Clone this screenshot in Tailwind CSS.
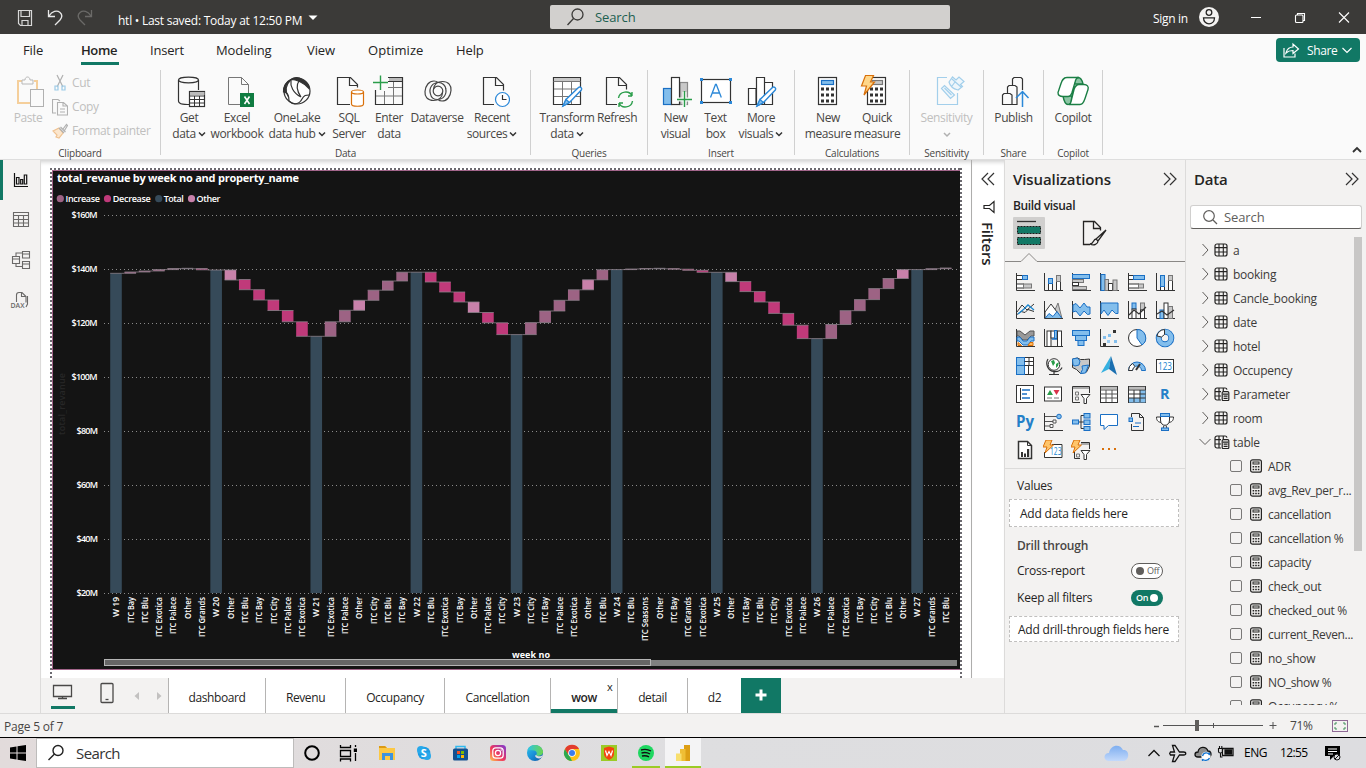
<!DOCTYPE html>
<html lang="en">
<head>
<meta charset="utf-8">
<title>htl - Power BI Desktop</title>
<script src="https://cdn.jsdelivr.net/npm/@tailwindcss/browser@4"></script>
</head>
<body class="w-[1366px] h-[768px] overflow-hidden flex flex-col font-['Open_Sans','Noto_Sans',sans-serif] text-[12px] text-[#252423] bg-[#f3f2f1] whitespace-nowrap">

<!-- shared symbols -->
<svg width="0" height="0" class="absolute">
  <defs>
    <symbol id="tbl" viewBox="0 0 14 14"><rect x="1" y="1" width="12" height="12" rx="2" fill="none" stroke="#252423" stroke-width="1.2"/><path d="M5 1v12M9.3 1v12M1 4.6h12M1 9h12" fill="none" stroke="#252423" stroke-width="1.1"/></symbol>
    <symbol id="tblcalc" viewBox="0 0 16 14"><path d="M7 13H3a2 2 0 0 1-2-2V3a2 2 0 0 1 2-2h8a2 2 0 0 1 2 1.6M5 1v12M9.3 1v3M1 4.6h6M1 9h6" fill="none" stroke="#252423" stroke-width="1.2"/><rect x="8.2" y="4.6" width="6.6" height="9" rx="1.2" fill="#f3f2f1" stroke="#252423" stroke-width="1.2"/><path d="M9 7.2h5M9.6 9.2h4M9.6 11.3h4" stroke="#252423" stroke-width="1.2"/></symbol>
    <symbol id="calc" viewBox="0 0 14 14"><rect x="1.6" y=".8" width="10.8" height="12.4" rx="2" fill="none" stroke="#252423" stroke-width="1.2"/><rect x="4" y="3" width="6" height="2" fill="none" stroke="#252423"/><path d="M3.6 7.7h1.6M6.2 7.7h1.6M8.8 7.7h1.6M3.6 10.4h1.6M6.2 10.4h1.6M8.8 10.4h1.6" stroke="#252423" stroke-width="1.5"/></symbol>
    <symbol id="pen" viewBox="0 0 22 22"><path d="M17.500 2c1.500-1.500 4 .5 2.800 2.500L8.500 17l-6.500 3.500L5 14z" fill="#fff" stroke="#2b88d8" stroke-width="1.4"/><path d="M5 14l3.500 3-6.500 3.500z" fill="#83beec" stroke="#2b88d8"/></symbol>
  </defs>
</svg>

<!-- title bar -->
<header class="h-[34px] shrink-0 bg-[#3b3a38] text-white flex items-center relative">
  <svg class="w-[110px] h-[34px]" viewBox="0 0 110 34" fill="none">
    <path d="M18.500 10.500h13v15h-11l-2-2zM21 10.500v6h8.500v-6M22 25.500v-5h6v5" stroke="#d8d8d8" stroke-width="1.200"/>
    <path d="M48.500 10v6.500h6.500M49 16c3-5 8-6 11-3.500s2 5 0 7.500l-5 5" stroke="#e8e8e8" stroke-width="1.300"/>
    <path d="M91.500 10v6.500H85M91 16c-3-5-8-6-11-3.500s-2 5 0 7.500l5 5" stroke="#6b6a68" stroke-width="1.300"/>
  </svg>
  <div class="w-[184px] ml-2 mt-[8px] tracking-[-0.25px]">htl • Last saved: Today at 12:50 PM</div>
  <svg class="w-3 h-3 ml-[5px]" viewBox="0 0 12 12"><path d="M1.500 4.500h9L6 9z" fill="#fff"/></svg>
  <div class="ml-[231px] w-[400px] h-6 bg-[#d2d0ce] rounded-[2px] flex items-center text-[#1c5f50] text-[13px]">
    <svg class="w-5 h-5 ml-4" viewBox="0 0 20 20" fill="none" stroke="#3b3a38" stroke-width="1.300"><circle cx="11.500" cy="7.500" r="5.500"/><path d="M7.500 11.500L1.500 18"/></svg>
    <span class="ml-[9px] mt-[2px] tracking-[-0.1px]">Search</span>
  </div>
  <div class="ml-[203px] w-[38px] tracking-[-0.3px] pt-[3px]">Sign in</div>
  <svg class="w-[20px] h-[20px] ml-[8px]" viewBox="0 0 20 20"><circle cx="10" cy="10" r="10" fill="#f3f2f1"/><g fill="none" stroke="#252423" stroke-width="1.300"><circle cx="10" cy="5.500" r="2.800"/><path d="M4.500 10.800h11c0 8-11 8-11 0z"/></g></svg>
  <svg class="absolute left-[1240px] top-0 w-[126px] h-[34px]" viewBox="1240 0 126 34" fill="none" stroke="#fff" stroke-width="1.100"><path d="M1251 17.500h10M1339 12.500l10 10M1349 12.500l-10 10"/><rect x="1295.500" y="15" width="7.500" height="7.500" rx="1"/><path d="M1297.500 15v-1.500h7V20.500h-1.500"/></svg>
</header>

<!-- ribbon tabs -->
<nav class="h-8 shrink-0 bg-[#fafafa] flex items-start text-[13px] pl-[23px] relative pt-[7px]">
  <span class="w-[58px] tracking-[-0.1px]">File</span>
  <span class="w-[38px] mr-[31px] font-semibold h-[24px] border-b-[3px] border-[#117865] tracking-[-0.4px]">Home</span>
  <span class="w-[66px] tracking-[-0.2px]">Insert</span>
  <span class="w-[91px] tracking-[-0.1px]">Modeling</span>
  <span class="w-[61px] tracking-[-0.1px]">View</span>
  <span class="w-[88px] tracking-[0.1px]">Optimize</span>
  <span class="tracking-[-0.1px]">Help</span>
  <div class="ml-auto mr-[6px] -mt-[3px] w-[84px] h-6 rounded bg-[#117865] text-white text-[12px] flex items-center">
    <svg class="w-5 h-5 ml-[5px]" viewBox="0 0 20 20" fill="none" stroke="#fff" stroke-width="1.200"><path d="M3 8v9h11v-3.500M5 13c1-4 3-6 7-6V4l5.500 5L12 13.500V10.500c-3 0-5 .5-7 2.500z"/></svg>
    <span class="ml-[6px] mt-[2px] tracking-[-0.4px]">Share</span>
    <svg class="w-3 h-3 ml-[4px]" viewBox="0 0 12 12" fill="none" stroke="#fff" stroke-width="1.200"><path d="M1.500 4L6 8.500 10.500 4"/></svg>
  </div>
</nav>

<!-- ribbon -->
<section class="h-[94px] shrink-0 bg-[#fafafa] flex text-[12px] leading-4 text-[#484644] tracking-[-0.38px] border-b border-[#dedede] relative">
  <div class="w-[161px] border-r border-[#d0d0d0] mb-1 mt-1 flex flex-col">
    <div class="flex h-[76px] shrink-0 text-[#c0bfbe]">
      <div class="w-[56px] flex flex-col items-center pt-[6px]">
        <svg class="w-[32px] h-8 ml-1" viewBox="14 76 32 32" fill="none"><path d="M22 81h-4v22h12M34 81h3v8" stroke="#f5cf9b" stroke-width="2"/><path d="M22 84v-4h3c0-4 5-4 5 0h3v4z" stroke="#b8b8b8"/><rect x="30.500" y="89.500" width="13" height="17" stroke="#b0b0b0" fill="#fafafa"/></svg>
        <span class="mt-[2px]">Paste</span>
      </div>
      <div class="flex flex-col pt-[1px]">
        <div class="h-6 flex items-center"><svg class="w-4 h-[18px] mr-[1px] -ml-[4px]" viewBox="0 0 16 18" fill="none" stroke="#b0b0b0" stroke-width="1.200"><path d="M5 1l6 12M11 1L5 13"/><path d="M3 12h3v4H3zM10 12h3v4h-3z" stroke="#9ccbe8"/></svg><span class="ml-[3px]">Cut</span></div>
        <div class="h-6 flex items-center"><svg class="w-4 h-[18px] mr-[1px] -ml-[4px]" viewBox="0 0 16 18" fill="none" stroke="#b0b0b0" stroke-width="1.100"><path d="M4 15H.5V1.500H6l2 1.500M5.500 4.500h6L15.500 8v9h-10zM11 4.500V8h4M8 11h5M8 14h5"/></svg><span class="ml-[3px]">Copy</span></div>
        <div class="h-6 flex items-center"><svg class="w-4 h-[18px] mr-[1px] -ml-[4px]" viewBox="0 0 16 18" fill="none" stroke="#b0b0b0" stroke-width="1.200"><path d="M1 9l6-3 4 5-4 5-3-1 1-2z" stroke="#efc18f" fill="#fbe6cd"/><path d="M7 6l5 5M8.500 5l5 5M11 7l3.500-4.500 1 1L12.500 8.500"/></svg><span class="ml-[3px]">Format painter</span></div>
      </div>
    </div>
    <div class="text-[10px] tracking-[-0.2px] text-center leading-[14px]">Clipboard</div>
  </div>

  <div class="w-[370px] border-r border-[#d0d0d0] mb-1 mt-1 flex flex-col">
    <div class="flex h-[76px] shrink-0 pl-1">
      <div class="w-12 flex flex-col items-center pt-[4px]"><svg class="w-9 h-9" viewBox="171 74 36 36" fill="none" stroke="#333" stroke-width="1.200"><path d="M178.500 80v21c0 4 9 3.500 10.500 3.500M198.500 80v10"/><ellipse cx="188.500" cy="80" rx="10" ry="2.800"/><rect x="189.500" y="91.500" width="15" height="15" fill="#fff"/><path d="M190 93.500h14.500" stroke="#bbb" stroke-width="3"/><path d="M189.500 96h15M189.500 99.500h15M189.500 103h15M194.500 96v10M199.500 96v10" stroke-width="1"/></svg><span>Get</span><span class="flex items-center">data<svg class="w-2 h-2 ml-[2px]" viewBox="0 0 8 8" fill="none" stroke="#333" stroke-width="1.500"><path d="M1 2.500l3 3 3-3"/></svg></span></div>
      <div class="w-12 flex flex-col items-center pt-[4px]"><svg class="w-9 h-9" viewBox="219 74 36 36" fill="none" stroke="#777"><path d="M240 104.500H228.500V77.500h13l7 7V93M241.500 77.500v7h7"/><rect x="240" y="93" width="14" height="14" fill="#107c41" stroke="none"/><path d="M244.500 96.500l5 7.500M249.500 96.500l-5 7.500" stroke="#fff" stroke-width="1.600"/></svg><span>Excel</span><span>workbook</span></div>
      <div class="w-[72px] flex flex-col items-center pt-[4px]"><svg class="w-9 h-9" viewBox="280 74 36 36" fill="none" stroke="#333" stroke-width="1.200"><circle cx="298" cy="91" r="13" fill="#fff"/><path d="M292 79.500c-5 2-8 7-7.500 12.500 2 0 4 2 5 5-4-6-3-12 2.500-17.500zM292 79.500c3-2.500 8-2.500 11 0 4 2 7 5 7 9-5-6-13-9-18-9z" fill="#333"/><path d="M285 92c3 0 5 3 5 9 4 4 10 4 13-2 2-4 4-4 7-4M292 80c-1 6 2 13 10 17M300 81c-3 4-2 10 2 16"/></svg><span>OneLake</span><span class="flex items-center">data hub<svg class="w-2 h-2 ml-[2px]" viewBox="0 0 8 8" fill="none" stroke="#333" stroke-width="1.500"><path d="M1 2.500l3 3 3-3"/></svg></span></div>
      <div class="w-8 flex flex-col items-center pt-[4px]"><svg class="w-9 h-9 shrink-0" viewBox="332 74 36 36" fill="none" stroke="#333" stroke-width="1.200"><path d="M351 104.500H338.500V77.500h13l7 7v3M350.500 77.500v8h8"/><path d="M352.500 92v12c0 3 12 3 12 0V92" stroke="#d9700a" fill="#fff"/><ellipse cx="358.500" cy="92" rx="6" ry="2" stroke="#d9700a" fill="#fff"/></svg><span>SQL</span><span>Server</span></div>
      <div class="w-12 flex flex-col items-center pt-[4px]"><svg class="w-9 h-9" viewBox="371 74 36 36" fill="none" stroke="#333" stroke-width="1.200"><path d="M389 79.500h13" stroke="#bbb" stroke-width="3"/><path d="M388 77.500h14.500v27h-27V90M388 81.500h14.500"/><path d="M384.500 91v13M393.500 82v22M388 87.500h14M376 96h26" stroke="#777" stroke-width="1"/><path d="M380.500 75.500v14.500M373 82.500h15" stroke="#2a9d4a" stroke-width="1.400"/></svg><span>Enter</span><span>data</span></div>
      <div class="w-12 flex flex-col items-center pt-[4px]"><svg class="w-9 h-9" viewBox="419 74 36 36" fill="none" stroke="#444" stroke-width="1.200"><circle cx="438" cy="91" r="4.800"/><path d="M442.500 92.500c0 5-4 8-9 8-6 0-9-4-8.500-9 .5-6 4-10.500 9-10.500 2 0 3 .5 4 1.500M433.500 89.500c0-5 4-8 9-8 6 0 9 4 8.500 9-.5 6-4 10.500-9 10.500-2 0-3-.5-4-1.500M430.500 94c-2-6 2-11.500 8-11.500 4 0 7 3 7.500 6.500M445.500 88c2 6-2 11.500-8 11.500-4 0-6.500-2.500-7-5.500"/></svg><span>Dataverse</span></div>
      <div class="w-[62px] flex flex-col items-center pt-[4px]"><svg class="w-9 h-9" viewBox="474 74 36 36" fill="none" stroke="#333" stroke-width="1.200"><path d="M494 104.500H483.500V77.500h13l7 7v6M495.500 77.500v8h8"/><circle cx="502.500" cy="99.500" r="7" stroke="#2b88d8" fill="#fff"/><path d="M502.500 95v4.500h4"/></svg><span>Recent</span><span class="flex items-center">sources<svg class="w-2 h-2 ml-[2px]" viewBox="0 0 8 8" fill="none" stroke="#333" stroke-width="1.500"><path d="M1 2.500l3 3 3-3"/></svg></span></div>
    </div>
    <div class="text-[10px] tracking-[-0.2px] text-center leading-[14px]">Data</div>
  </div>

  <div class="w-[117px] border-r border-[#d0d0d0] mb-1 mt-1 flex flex-col">
    <div class="flex h-[76px] shrink-0">
      <div class="w-[72px] flex flex-col items-center pt-[4px]"><svg class="w-9 h-9" viewBox="549 74 36 36" fill="none" stroke="#333" stroke-width="1.200"><path d="M553.500 77.500h27v27h-27z" fill="#fff"/><path d="M554 79.500h26" stroke="#c8c8c8" stroke-width="3"/><path d="M553.500 81.500h27M562.500 82v22M571.500 82v22M554 89h26M554 96.500h26" stroke="#777" stroke-width="1"/><use href="#pen" x="561" y="85.500" width="22" height="22"/></svg><span>Transform</span><span class="flex items-center">data<svg class="w-2 h-2 ml-[2px]" viewBox="0 0 8 8" fill="none" stroke="#333" stroke-width="1.500"><path d="M1 2.500l3 3 3-3"/></svg></span></div>
      <div class="w-7 flex flex-col items-center pt-[4px]"><svg class="w-9 h-9 shrink-0" viewBox="599 74 36 36" fill="none" stroke="#333" stroke-width="1.200"><path d="M617 104.500H606.500V77.500h13l7 7v5M618.500 77.500v8h8"/><path d="M618.500 98c1-7 11-8 13.500-2v-4M632 96h-4M632.500 101c-1 7-11 8-13.500 2v4M619 103h4" stroke="#2a9d4a" stroke-width="1.400"/></svg><span>Refresh</span></div>
    </div>
    <div class="text-[10px] tracking-[-0.2px] text-center leading-[14px]">Queries</div>
  </div>

  <div class="w-[147px] border-r border-[#d0d0d0] mb-1 mt-1 flex flex-col">
    <div class="flex h-[76px] shrink-0 pl-1">
      <div class="w-[47px] flex flex-col items-center pt-[4px]"><svg class="w-9 h-9" viewBox="658 74 36 36" fill="none" stroke="#333" stroke-width="1.200"><rect x="680" y="82.500" width="7.500" height="22" fill="#c8c8c8" stroke="#888"/><rect x="663.500" y="88.500" width="8" height="16" fill="#83beec" stroke="#1a6fc4"/><rect x="671.500" y="77.500" width="8" height="27" fill="#fff"/><path d="M684.500 92v15M677 99.500h15" stroke="#fafafa" stroke-width="4"/><path d="M684.500 91v16M677 99.500h15" stroke="#2a9d4a" stroke-width="1.400"/></svg><span>New</span><span>visual</span></div>
      <div class="w-[33px] flex flex-col items-center pt-[4px]"><svg class="w-9 h-9 shrink-0" viewBox="698 74 36 36" fill="none" stroke="#333" stroke-width="1.200"><rect x="701.500" y="79.500" width="29" height="23" fill="#fff"/><path d="M700 78h3v3h-3zM729 78h3v3h-3zM700 101h3v3h-3zM729 101h3v3h-3z" fill="#2b88d8" stroke="none"/><path d="M710.500 97.500l5-13h.8l5 13M712.500 93h7" stroke="#2b88d8" stroke-width="1.300"/></svg><span>Text</span><span>box</span></div>
      <div class="w-[58px] flex flex-col items-center pt-[4px]"><svg class="w-9 h-9" viewBox="743 74 36 36" fill="none" stroke="#333" stroke-width="1.200"><path d="M748.500 88.500h7.500v16h-7.500zM756.500 77.500h8v27h-8zM764.500 82.500h8v22h-8z" fill="#fff"/><use href="#pen" x="755" y="85.500" width="22" height="22"/></svg><span>More</span><span class="flex items-center">visuals<svg class="w-2 h-2 ml-[2px]" viewBox="0 0 8 8" fill="none" stroke="#333" stroke-width="1.500"><path d="M1 2.500l3 3 3-3"/></svg></span></div>
    </div>
    <div class="text-[10px] tracking-[-0.2px] text-center leading-[14px]">Insert</div>
  </div>

  <div class="w-[115px] border-r border-[#d0d0d0] mb-1 mt-1 flex flex-col">
    <div class="flex h-[76px] shrink-0">
      <div class="w-[66px] flex flex-col items-center pt-[4px]"><svg class="w-9 h-9" viewBox="810 74 36 36" fill="none" stroke="#333" stroke-width="1.200"><rect x="818.500" y="77.500" width="18" height="27" fill="#fff"/><rect x="821.500" y="80.500" width="12" height="4" fill="#83beec" stroke="#1a6fc4"/><path d="M821 89h13M821 95h13M821 101h13" stroke-width="3" stroke-dasharray="3 2"/></svg><span>New</span><span>measure</span></div>
      <div class="w-8 flex flex-col items-center pt-[4px]"><svg class="w-9 h-9 shrink-0" viewBox="859 74 36 36" fill="none" stroke="#333" stroke-width="1.200"><rect x="867.500" y="77.500" width="18" height="27" fill="#fff"/><rect x="872" y="80.500" width="10.500" height="4" fill="#c8c8c8" stroke="#777"/><path d="M870 89h13M870 95h13M870 101h13" stroke-width="3" stroke-dasharray="3 2"/><path d="M865.500 75.500h8l-3 6.500h4l-10.500 13 2.500-9h-5z" fill="#ffd78a" stroke="#d9700a"/></svg><span>Quick</span><span>measure</span></div>
    </div>
    <div class="text-[10px] tracking-[-0.2px] text-center leading-[14px]">Calculations</div>
  </div>

  <div class="w-[74px] border-r border-[#d0d0d0] mb-1 mt-1 flex flex-col">
    <div class="flex flex-col items-center h-[76px] shrink-0 pt-[4px] text-[#c0bfbe]">
      <svg class="w-9 h-9" viewBox="928 74 36 36" fill="none" stroke="#a3cfeb" stroke-width="1.200"><path d="M946 77.500h-9.500v27h20V93"/><path d="M940.500 88.500l3-3 10 9.500-4 3.500zM943.500 88l7 7M948 82l3.500-5 3.500 3 3-3 5 4.500-3.500 3 2 2-4.500 3.500c-4-1-8-4-9-8zM951 79l9 8M954 82l-3 4" fill="#eef6fb"/></svg>
      <span>Sensitivity</span><svg class="w-2 h-4" viewBox="0 0 8 16" fill="none" stroke="#b0b0b0" stroke-width="1.500"><path d="M1 7l3 3 3-3"/></svg>
    </div>
    <div class="text-[10px] tracking-[-0.2px] text-center leading-[14px]">Sensitivity</div>
  </div>
  <div class="w-[60px] border-r border-[#d0d0d0] mb-1 mt-1 flex flex-col">
    <div class="flex flex-col items-center h-[76px] shrink-0 pt-[4px]">
      <svg class="w-9 h-9" viewBox="996 74 36 36" fill="none" stroke="#333" stroke-width="1.200"><path d="M1002.500 104.500v-9.500l1.500-1.500h6l2 1.500v9.500zM1007.500 93.500V87l1.500-1.500h6l2 1.500v17.500h-5M1012.500 85V79l1.500-1.500h7l1.500 1.500V90"/><path d="M1022.500 107V91.500M1016 98l6.500-6.500 6 6.500" stroke="#2b88d8" stroke-width="1.500"/></svg>
      <span>Publish</span>
    </div>
    <div class="text-[10px] tracking-[-0.2px] text-center leading-[14px]">Share</div>
  </div>
  <div class="w-[59px] border-r border-[#d0d0d0] mb-1 mt-1 flex flex-col">
    <div class="flex flex-col items-center h-[76px] shrink-0 pt-[4px]">
      <svg class="w-9 h-9" viewBox="1055 74 36 36" fill="#fff" stroke="#1b7f45" stroke-width="1.400"><path d="M1072 84c1-4 2-6.500 6-6.500 3 0 4 2 5 6.500zM1063 96h9c-1 5 0 8.500-4 8.500-3 0-4-3-5-8.500z" fill="#8cc5a4"/><path d="M1077 77.500h-10c-4 0-5 3-6 6l-3 9c0 3 2 4 5 4h5c2 0 3-1 4-4l3-10c.5-3 1-5 4-5zM1069 104.500h11c3 0 4-3 5-6l3-9c1-3-1-5-4-5h-5c-3 0-4 2-5 5l-2 8c-1 4-1 7-3 7z"/></svg>
      <span>Copilot</span>
    </div>
    <div class="text-[10px] tracking-[-0.2px] text-center leading-[14px]">Copilot</div>
  </div>
  <svg class="w-[10px] h-[8px] ml-auto mr-1 mt-[80px]" viewBox="0 0 10 8" fill="none" stroke="#333" stroke-width="1.800"><path d="M1 6l4-4 4 4"/></svg>
</section>

<!-- workspace -->
<main class="h-[553px] shrink-0 flex">
  <aside class="w-[41px] border-r border-[#dcdbda] relative flex flex-col items-center">
    <div class="absolute left-0 top-0 w-[3px] h-10 bg-[#117865]"></div>
    <svg class="w-[40px] h-[160px]" viewBox="0 160 40 160" fill="none" stroke="#6a6968" stroke-width="1.100">
      <g stroke="#111" stroke-width="1.200"><path d="M14.500 173v13.500h13.500M16.500 177.500h2.500v6.500h-2.500zM20.700 179.500h2v4.500h-2zM24.300 175h2.400v9h-2.400z"/></g>
      <path d="M13.500 212.500h15v14h-15zM13.500 215.500h15M13.500 219.500h15M13.500 223h15M18.500 215v11M23.500 215v11"/>
      <path d="M12.500 256.500h7v7h-7zM12.500 259h7M22.500 251.500h7v6.500h-7zM22.500 254h7M22.500 261.500h7v7h-7zM22.500 264h7M16 256v-3h6M16 264v2.500h6"/>
      <path d="M16.500 302v-7c0-2 1-2.500 2.500-2.500h3l4 4v6M21.500 292.500v4h4M27.500 296v8l-1.500 3"/>
      <text x="10.500" y="307.500" font-size="6.500" textLength="14" lengthAdjust="spacingAndGlyphs" fill="#6a6968" stroke="none" font-weight="600">DAX</text>
    </svg>
  </aside>

  <div class="w-[964px] flex flex-col">
    <div class="h-[518px] flex">
      <div class="w-[930px] bg-white relative pt-[10px] pl-[11px] shadow-[inset_0_5px_4px_-3px_#d0d0d0]">
        <!-- page outline -->
        <div class="absolute left-[9px] top-2 w-[912px] h-[2px] bg-[repeating-linear-gradient(90deg,#6c6a70_0_2px,#fff_2px_4px)]"></div>
        <div class="absolute left-[9px] top-2 w-[2px] h-[510px] bg-[repeating-linear-gradient(180deg,#6c6a70_0_2px,#fff_2px_4px)]"></div>
        <div class="absolute left-[919px] top-2 w-[2px] h-[510px] bg-[repeating-linear-gradient(180deg,#6c6a70_0_2px,#fff_2px_4px)]"></div>
        <svg id="chart" class="w-[908px] h-[500px] bg-[#141414]" viewBox="52 170 908 500"></svg>
      </div>
      <div class="w-[34px] bg-white border-l border-r border-l-[#aeadac] border-r-[#dcdbda] flex flex-col items-center pt-[11px] shadow-[inset_0_5px_4px_-3px_#d0d0d0]">
        <svg class="w-4 h-4" viewBox="0 0 16 16" fill="none" stroke="#333" stroke-width="1.200"><path d="M8 2L2 8l6 6M14 2L8 8l6 6"/></svg>
        <svg class="w-4 h-4 mt-[12px] ml-[2px]" viewBox="0 0 16 16" fill="none" stroke="#252423" stroke-width="1.200"><path d="M13 2.500v11L8.500 9.500H3v-3h5.500z"/></svg>
        <span class="[writing-mode:vertical-rl] text-[15px] font-semibold mt-[7px] tracking-[-0.2px] leading-4">Filters</span>
      </div>
    </div>
    <div class="h-[35px] flex">
      <div class="w-[127px] flex">
        <svg class="w-[127px] h-[35px]" viewBox="41 678 127 35" fill="none" stroke="#4a4948" stroke-width="1.300"><path d="M53.500 685.500h18v11h-18zM58 698.500h9M62.500 697v2"/><path d="M51 707.500h24" stroke="#117865" stroke-width="3"/><rect x="101" y="683.500" width="12" height="19" rx="1"/><path d="M105.500 699.500h3"/><path d="M139 692v8l-4.500-4zM157 692v8l4.500-4z" fill="#c2c1c0" stroke="none"/></svg>
      </div>
      <div class="flex text-[12px] text-[#252423] tracking-[-0.4px] [&>div]:bg-white [&>div]:border-l [&>div]:border-[#b5b4b3] [&>div]:flex [&>div]:items-center [&>div]:justify-center [&>div]:pt-[4px]">
        <div class="w-[97px]">dashboard</div><div class="w-20">Revenu</div><div class="w-[99px]">Occupancy</div><div class="w-[106px]">Cancellation</div>
        <div class="w-[67px] relative font-semibold shadow-[inset_0_-4px_0_#117865]">wow<span class="absolute left-[56px] top-[1px] text-[11px] font-normal">x</span></div>
        <div class="w-[70px]">detail</div><div class="w-[54px]">d2</div>
      </div>
      <div class="w-10 bg-[#117865] flex items-center justify-center"><svg class="w-3 h-3 -mt-[2px]" viewBox="0 0 12 12"><path d="M6 .5v11M.5 6h11" stroke="#fff" stroke-width="3"/></svg></div>
      <div class="flex-1 border-r border-[#dcdbda]"></div>
    </div>
  </div>

  <!-- visualizations -->
  <section class="w-[180px] flex flex-col">
    <div class="flex items-center h-[38px] pl-2 pr-[7px]"><span class="text-[15px] font-semibold tracking-[-0.1px]">Visualizations</span><svg class="w-4 h-4 ml-auto" viewBox="0 0 16 16" fill="none" stroke="#333" stroke-width="1.200"><path d="M2 2l6 6-6 6M8 2l6 6-6 6"/></svg></div>
    <div class="pl-2 text-[12px] font-semibold leading-4 tracking-[-0.35px]">Build visual</div>
    <svg class="w-[180px] h-[54px]" viewBox="1005 214 180 54" fill="none">
      <rect x="1013" y="217" width="32" height="32" rx="1" fill="#d0cfce"/><path d="M1017 221.500h19" stroke="#333" stroke-width="1.300"/>
      <path d="M1017.500 226.500h23v7h-23zM1017.500 237.500h23v7h-23z" fill="#117865" stroke="#1a1a1a" stroke-dasharray="2 1"/>
      <path d="M1090 244.500h-6.500V221.500h11l6 6v3M1093.500 221.500v7h7M1106 230l-10 9 2 2zM1096 239c-3 0-2 5-6 5 4 2 8 0 8-3" stroke="#252423" stroke-width="1.300"/>
      <path d="M1005 261.500h16l8-8 8 8h148" stroke="#8a8886"/>
    </svg>
    <div id="viz" class="grid grid-cols-[repeat(6,28px)] auto-rows-[28px] pl-[6px] h-[200px]"></div>
    <div class="border-t border-[#dcdbda] flex flex-col tracking-[-0.22px]">
      <div class="pl-3 pt-[9px] leading-4 h-[30px]">Values</div>
      <div class="ml-1 w-[170px] h-7 bg-white border border-dashed border-[#c0bfbe] flex items-center pt-[2px] pl-[10px]">Add data fields here</div>
      <div class="pl-3 h-[35px] pt-[11px] leading-4 font-semibold text-[#484644]">Drill through</div>
      <div class="pl-3 h-[18px] flex items-center">Cross-report<span class="ml-auto mr-[22px] w-8 h-4 rounded-full border border-[#605e5c] bg-white flex items-center text-[9px] text-[#605e5c]"><i class="w-2 h-2 rounded-full bg-[#605e5c] ml-1 mr-[3px]"></i>Off</span></div>
      <div class="pl-3 h-[18px] mt-[9px] flex items-center">Keep all filters<span class="ml-auto mr-[22px] w-8 h-4 rounded-full bg-[#117865] flex items-center text-[9px] text-white font-semibold pl-[5px]">On<i class="w-2 h-2 rounded-full bg-white ml-auto mr-[5px]"></i></span></div>
      <div class="mt-[9px] ml-1 w-[170px] h-[26px] bg-white border border-dashed border-[#c0bfbe] flex items-center pt-px pl-[8px]">Add drill-through fields here</div>
    </div>
  </section>

  <!-- data -->
  <section class="w-[181px] border-l border-[#dcdbda] flex flex-col relative">
    <div class="flex items-center h-[38px] pl-2 pr-[6px]"><span class="text-[15px] font-semibold tracking-[-0.2px]">Data</span><svg class="w-4 h-4 ml-auto" viewBox="0 0 16 16" fill="none" stroke="#333" stroke-width="1.200"><path d="M2 2l6 6-6 6M8 2l6 6-6 6"/></svg></div>
    <div class="mt-[7px] ml-[4px] w-[172px] h-6 rounded-[3px] bg-white border border-[#d0cfce] border-b-[#605e5c] flex items-center text-[13px] text-[#605e5c] tracking-[-0.1px]"><svg class="w-4 h-4 ml-[11px] mr-[6px]" viewBox="0 0 16 16" fill="none" stroke="#605e5c" stroke-width="1.200"><circle cx="7" cy="7" r="5.300"/><path d="M11 11l4 4"/></svg><span class="mt-px">Search</span></div>
    <div id="fields" class="mt-[10px] h-[466px] overflow-hidden flex flex-col text-[#3b3a39]"></div>
    <div class="absolute left-[168px] top-[77px] w-2 h-[314px] bg-[#c8c7c6]"></div>
  </section>
</main>

<!-- status bar -->
<footer class="h-6 shrink-0 border-t border-[#dcdbda] flex items-center text-[#484644]">
  <span class="ml-1 tracking-[-0.2px] pt-[3px]">Page 5 of 7</span>
  <svg class="w-[125px] h-6 ml-auto" viewBox="1153 714 125 24" fill="none" stroke="#555"><path d="M1154 726.500h5" stroke-width="1.500"/><path d="M1163 725.500h100M1213.500 723v5"/><path d="M1195 720h4v11h-4z" fill="#605e5c" stroke="none"/><path d="M1269.500 725.500h7M1273 722v7"/></svg>
  <span class="ml-[12px] w-[26px] pt-[1px] tracking-[-0.3px]">71%</span>
  <svg class="w-4 h-3 ml-[16px] mr-[18px]" viewBox="0 0 16 12" fill="none" stroke="#605e5c"><rect x=".5" y=".5" width="15" height="11" stroke="#8f6a96"/><path d="M3 5V3h2M11 3h2v2M13 7v2h-2M5 9H3V7" stroke="#3f8f5a"/></svg>
</footer>

<!-- taskbar -->
<div class="h-[31px] shrink-0 border-t border-black bg-linear-to-r from-[#e2dbdb] via-[#dedee0] to-[#dddde0] flex items-center text-black">
  <svg class="w-4 h-4 ml-[10px]" viewBox="0 0 16 16"><path d="M0 2.500L6.500 1.500V7.500H0zM7.500 1.300L16 0v7.500H7.500zM0 8.500h6.500v6L0 13.500zM7.500 8.500H16V16l-8.500-1.300z"/></svg>
  <div class="ml-[10px] w-[258px] h-[30px] bg-white border border-[#bdbcbb] flex items-center text-[15px] text-[#333]"><svg class="w-[18px] h-[18px] ml-[10px] mr-[11px]" viewBox="0 0 18 18" fill="none" stroke="#222" stroke-width="1.400"><circle cx="11" cy="6.500" r="5"/><path d="M7.500 10L1.500 16"/></svg><span class="tracking-[-0.6px]">Search</span></div>
  <svg class="w-[411px] h-[30px]" viewBox="294 738 411 30" fill="none">
    <defs>
      <linearGradient id="ig" x1="0" y1="1" x2="1" y2="0"><stop offset="0" stop-color="#ffc850"/><stop offset=".45" stop-color="#f0355c"/><stop offset="1" stop-color="#7a3bd6"/></linearGradient>
      <linearGradient id="ed" x1="0" y1="0" x2="1" y2="1"><stop offset="0" stop-color="#2dc3e8"/><stop offset=".5" stop-color="#1a8fd8"/><stop offset="1" stop-color="#0c4f9e"/></linearGradient>
      <linearGradient id="eg" x1="0" y1="0" x2="1" y2="0"><stop offset="0" stop-color="#2dc3e8"/><stop offset="1" stop-color="#6cd64a"/></linearGradient>
    </defs>
    <circle cx="312" cy="753" r="6.800" stroke="#000" stroke-width="2"/>
    <path d="M340.500 745v2.500h10V745M340.500 750.500h10v6h-10zM340.500 761.500V759h10v2.500M355.500 745v2M355.500 753v8" stroke="#000" stroke-width="1.300"/><path d="M353.800 748.500h3.200v3.500h-3.200z" fill="#000"/>
    <path d="M379 746h6l2 2h8v12h-16z" fill="#fcc844"/><path d="M379 746h6l2 2h-8z" fill="#dc9a14"/><path d="M382 760v-7h11v7h-3v-4h-5v4z" fill="#3d93dd"/>
    <circle cx="424" cy="753" r="6.300" fill="#1c9de4"/><circle cx="421" cy="750" r="4" fill="#28a8ea"/><circle cx="427" cy="756" r="4" fill="#28a8ea"/><text x="420.700" y="757.200" font-size="11" font-weight="700" fill="#fff">S</text>
    <path d="M456 749v-2.500h9V749" stroke="#2fb9f0" stroke-width="1.500"/><rect x="453" y="748.500" width="15" height="12" rx="1.500" fill="#14508f"/><path d="M457 751h3v3h-3z" fill="#f25022"/><path d="M461 751h3v3h-3z" fill="#7fba00"/><path d="M457 755h3v3h-3z" fill="#00a4ef"/><path d="M461 755h3v3h-3z" fill="#ffb900"/>
    <rect x="490" y="745" width="16" height="16" rx="3.500" fill="url(#ig)"/><rect x="492.800" y="747.800" width="10.400" height="10.400" rx="3" stroke="#fff" stroke-width="1.200"/><circle cx="498" cy="753" r="2.600" stroke="#fff" stroke-width="1.200"/><circle cx="501.200" cy="750" r=".7" fill="#fff"/>
    <circle cx="535" cy="753" r="8" fill="url(#ed)"/><path d="M527.500 750c2-7 14-7 15.500 1.500.5 4-5 5.500-7 3.500 1.500-1 1-4-2-4.500-3-.5-5 0-6.500-.5z" fill="url(#eg)"/><path d="M536 755c2 2 5 1.500 6.800 0-.5 2-2 3.500-3.800 3.500-3 0-5-3-3-3.500z" fill="#dedee0"/>
    <g><circle cx="572" cy="753" r="8" fill="#fbc116"/><path d="M565 749l5 8 2 4a8 8 0 0 1-7-12z" fill="#2da94f"/><path d="M572 749h7a8 8 0 0 0-14 0l3 5z" fill="#e33b2e"/><circle cx="572" cy="753" r="3.800" fill="#fff"/><circle cx="572" cy="753" r="3" fill="#3a7cec"/></g>
    <rect x="601" y="745" width="16" height="16" fill="#9bcb26"/><path d="M604 748l5-1.500 5 1.500v6c0 3-3 5-5 6-2-1-5-3-5-6z" fill="#f4430f"/><path d="M605.500 750.500l1.500 5 2-4 2 4 1.500-5" stroke="#fff" stroke-width="1.200"/>
    <path d="M632 766h28v2h-28zM665 766h36v2h-36z" fill="#9bcb26"/><circle cx="646" cy="753" r="8" fill="#1ed760"/><path d="M641 750c3-1 7-.7 10 1M641.500 753c3-.8 6-.5 8.500 1M642 756c2.500-.6 5-.3 7 .8" stroke="#111" stroke-width="1.400"/>
    <path d="M665 738h36v28h-36z" fill="#f4f4f5"/><path d="M684 745h6v16h-6z" fill="#dd9f15"/><path d="M680 749h5.500v12H680z" fill="#efbe35"/><path d="M676 753.500h5.500v7.500H676z" fill="#f8df6e"/>
  </svg>
  <svg class="w-[142px] h-[30px] ml-[395px]" viewBox="1100 738 142 30" fill="none" stroke="#111" stroke-width="1.300">
    <defs><linearGradient id="cl" x1="0" y1="0" x2="0" y2="1"><stop offset="0" stop-color="#7eaef0"/><stop offset="1" stop-color="#c3d9fb"/></linearGradient></defs>
    <path d="M1109 761c-6 0-6-8 0-8 1-8 11-10 14-3 7-1 7 11 0 11z" fill="url(#cl)" stroke="none"/>
    <path d="M1148.500 756l5.500-5.500 5.500 5.500"/>
    <path d="M1170.500 752h4l-2-6.500h2.500l4.500 6.500h4c3 0 3 3 0 3h-4l-4.500 6.500h-2.500l2-6.500h-4l-.8-1.500z"/>
    <path d="M1198 757c-4 0-4-5 0-5 1-6 8-6 10-1 3 0 4 3 2 6z" fill="#8e8e8e"/><circle cx="1206" cy="756.500" r="4" fill="#fff" stroke="#fff"/><path d="M1202.500 756c1-4 6-4 7-1v-2.500M1209.500 758c-1 3-6 3-7 1v2" stroke="#1273cf"/>
    <path d="M1222.500 748.500h10.500v7h-10.500z" fill="#fafafa"/><path d="M1225 750h6.500v4H1225z" fill="#111"/><path d="M1218.500 748.500h4v3c0 2-4 2-4 0zM1219.500 746v2M1221.800 746v2M1220.500 753v4h2" stroke-width="1.100"/>
  </svg>
  <span class="ml-[2px] w-[23px] text-[12px] tracking-[-0.5px]">ENG</span>
  <span class="ml-[13px] w-[27px] text-[12px] tracking-[-0.6px]">12:55</span>
  <svg class="w-4 h-4 ml-[18px]" viewBox="0 0 16 16"><path d="M0 1h15v10H9l-4 4v-4H0z"/><path d="M3 4h9M3 6.500h9M3 9h5" stroke="#fff"/><circle cx="12" cy="12" r="3" fill="#dedee0" stroke="#111"/><path d="M10 14l4-4" stroke="#111"/></svg>
</div>

<script>
  // ---- waterfall chart ----
  const W='W', colors={I:'#9d6384',D:'#c03a7a',T:'#364a59',O:'#c881aa'};
  const rows=[
    ['W 19','T',273.3],['ITC Bay','I',272,273.3],['ITC Blu','I',271,272],['ITC Exotica','I',269.6,271],['ITC Palace','I',268.5,269.6],['Other','T',268.3,268.8],['ITC Grands','D',268.5,269.8],
    ['W 20','T',270],['Other','O',270,280],['ITC Blu','D',279.5,289.7],['ITC Bay','D',289.7,300],['ITC City','D',300,310.5],['ITC Palace','D',310.5,321.8],['ITC Exotica','D',321.8,336.3],
    ['W 21','T',336.3],['ITC Exotica','I',321.8,336.3],['ITC Palace','I',310.3,321.8],['Other','O',300.3,310.3],['ITC City','I',290.2,300.3],['ITC Blu','I',281,290.2],['ITC Bay','I',272.2,281],
    ['W 22','T',272.2],['ITC Blu','D',272.2,282],['ITC Exotica','D',282,292],['ITC Bay','D',292,302],['Other','O',302,312.5],['ITC Palace','D',312.5,322.8],['ITC City','D',322.8,334.6],
    ['W 23','T',334.6],['ITC City','I',322.6,334.6],['ITC Bay','I',311,322.6],['ITC Palace','I',300.3,311],['ITC Exotica','I',289.8,300.3],['Other','O',279.8,289.8],['ITC Blu','I',269.8,279.8],
    ['W 24','T',269.6],['ITC Blu','I',269,269.6],['ITC Seasons','I',268.6,269],['Other','T',268.3,268.8],['ITC Bay','D',268.6,269.2],['ITC Grands','D',269.2,270.3],['ITC Exotica','D',270.3,272.3],
    ['W 25','T',272.3],['Other','O',272.3,281.6],['ITC Bay','D',281.6,291.6],['ITC Blu','D',291.6,302],['ITC City','D',302,313.4],['ITC Exotica','D',313.4,325.2],['ITC Palace','D',325.2,338.6],
    ['W 26','T',338.6],['ITC Palace','I',324.5,338.6],['ITC Exotica','I',310.7,324.5],['ITC Bay','I',299.6,310.7],['ITC City','I',288.6,299.6],['ITC Blu','I',278.5,288.6],['Other','O',269.6,278.5],
    ['W 27','T',269.6],['ITC Grands','I',268.7,269.6],['ITC Blu','I',268,268.7]];
  const labelLen={'W':20,'ITC Bay':26,'ITC Blu':26,'ITC City':27,'ITC Palace':37,'ITC Exotica':40,'ITC Grands':40,'ITC Seasons':44,'Other':22};
  let s='<g font-size="9" fill="#fff" font-weight="600">';
  s+='<text x="57" y="182" font-size="11" font-weight="700" textLength="242">total_revanue by week no and property_name</text>';
  [['Increase',60.3,65.500,34.500,colors.I],['Decrease',107.5,112.800,38,colors.D],['Total',158.700,163.700,20,colors.T],['Other',191.500,196.500,24,colors.O]].forEach(([t,c,x,w,f])=>{
    s+=`<circle cx="${c}" cy="198.700" r="3.600" fill="${f}"/><text x="${x}" y="202" textLength="${w}">${t}</text>`;});
  for(let i=0;i<8;i++){const y=215+54*i,v=160-20*i;
    s+=`<text x="${v>=100?71.500:76.500}" y="${y+2.800}" textLength="${v>=100?26:21.500}">$${v}M</text><path d="M104 ${y+.5}H957" stroke="#8a8a8a" stroke-dasharray="1 3"/>`;}
  s+='</g>';
  rows.forEach(([n,k,a,b],i)=>{
    const x=110.2+14.305*i, total=n[0]===W;
    s+=`<rect x="${x}" y="${a}" width="11.600" height="${(total?593:b)-a}" fill="${colors[k]}"/>`;
    s+=`<path d="M${x} ${a}h11.600${total?'':`M${x} ${b}h11.600`}" stroke="#8d828c" stroke-width=".8"/>`;
    s+=`<text transform="translate(${x+9} 597) rotate(-90)" text-anchor="end" font-size="9" fill="#fff" font-weight="600" textLength="${total?labelLen.W:labelLen[n]}" lengthAdjust="spacingAndGlyphs">${n}</text>`;
  });
  // connector from each bar's closing level to the next bar
  rows.forEach(([n,k,a,b],i)=>{
    if(i===rows.length-1) return;
    const nx=rows[i+1], x=110.2+14.305*i+11.6;
    const end=n[0]===W?a:(nx[0][0]===W?nx[2]:(Math.abs(b-nx[2])<Math.abs(a-nx[3])?b:a));
    s+=`<path d="M${x} ${end}h2.700" stroke="#8d828c" stroke-width=".8"/>`;
  });
  s+='<text transform="translate(65 435) rotate(-90)" font-size="9" font-weight="600" fill="#272727" textLength="62">total_revanue</text>';
  s+='<text x="512" y="658" font-size="9" font-weight="700" fill="#fff" textLength="38">week no</text>';
  s+='<rect x="104" y="660" width="853" height="6" fill="#808080"/><rect x="104.500" y="659.500" width="546" height="6" fill="#666" stroke="#b5b5b5"/>';
  s+='<path d="M52.500 170v499.500H960M52 170.500h908" fill="none" stroke="#a2658a"/>';
  document.getElementById('chart').innerHTML=s;

  // ---- visual gallery ----
  const B='fill="#83beec" stroke="#1a6fc4"',G='fill="#c8c8c8" stroke="#777"',H='fill="#fff" stroke="#333"';
  const ax='<path d="M1.500 1v17.500H20" stroke="#333"/>';
  const r=(x,y,w,h,c)=>`<rect x="${x}" y="${y}" width="${w}" height="${h}" ${c}/>`;
  const bolt='<path d="M3 0h6L7 5h3.500L2 13l2-6H0z" fill="#ffc56b" stroke="#d9700a"/>';
  const icons=[
    ax+r(1.5,3.5,6,4,H)+r(7.5,3.5,5,4,B)+r(1.5,12,7,4,H)+r(8.5,12,8,4,G),
    ax+r(5.5,11.5,4,7,H)+r(5.5,6.5,4,5,B)+r(13.5,8.5,4,10,H)+r(13.5,3.5,4,6,G),
    ax+r(1.5,2.5,17,4,B)+r(1.5,7.5,11,3,G)+r(1.5,10.5,6,3,H)+r(1.5,14.5,14,3,G),
    ax+r(2,2.5,4,16,B)+r(6,7.5,3.5,11,G)+r(9.5,11.500,4,7,H)+r(14,8,4,10.500,G),
    ax+r(1.5,3.5,5,4,H)+r(6.500,3.5,11,4,B)+r(1.5,12,10,4,H)+r(11.500,12,5,4,G),
    ax+r(5.5,14,4,4.500,H)+r(5.500,3.5,4,11,B)+r(13.500,8,4,10.500,H)+r(13.500,3.500,4,5,G),
    ax+'<path d="M2 12l5-7 5 5 7-6M2 14.500l4-3 4 1 3-3 6 2" stroke="#333"/><path d="M3 14l6-5 4-4 6 5" stroke="#1a86d0" stroke-width="1.300"/>',
    '<path d="M11 12l4-9 4 15.500h-5z" fill="#c8c8c8" stroke="#777"/><path d="M2 12l6-8 6 8 2 6H2z" fill="#fff" stroke="#333"/><path d="M2 18.500l4-5 4 3 4-5 5 7z" fill="#83beec" stroke="#1a6fc4"/><path d="M1.500 1v17.500H20" stroke="#333"/>',
    ax+'<path d="M2 5l3-1.500L9 8l4-5 3 4h3v7l-2.500.5L13 11l-4 5-4-5-3 1z" fill="#83beec" stroke="#1a6fc4"/>',
    ax+'<path d="M2 3h17v10.500h-2.500L13 10l-4 5.500L5 10l-3 4z" fill="#83beec" stroke="#1a6fc4"/>',
    ax+r(5,3,4,6,B)+r(5,9,4,9.500,H)+r(13.500,3,4,7,G)+r(13.500,10,4,8.500,H)+'<path d="M2 15l5-5 5 4 7-7" stroke="#333" stroke-width="1.200"/>',
    ax+r(5,10,4,8.500,B)+r(9,3,4,15.500,H)+r(13.500,6.500,4,12,G)+'<path d="M2 14l5-3 5 4 7-5" stroke="#333" stroke-width="1.200"/>',
    ax+'<path d="M2 3h3l5 4 5-4h4v5h-3l-4 4H8L4 8H2z" fill="#999" stroke="#555"/><path d="M2 9h3l3 4h4l3-4h4v4h-3l-3 4H8l-4-4H2z" fill="#83beec" stroke="#1a6fc4"/><path d="M3 14.500l3.500 3H3zM18 14.500h-3l-2 3h5z" fill="#ffb95e" stroke="#d9700a"/>',
    ax+r(4,3,4,15.500,H)+r(8,3,3.500,7,H)+'<path d="M9 11h5" stroke="#1a6fc4" stroke-width="1.500"/>'+r(11.500,2.500,2.500,8,B)+r(14.500,3,4,15.500,H),
    r(1.5,2.500,17,5,B)+r(4.500,7.500,11,5,B)+r(7,12.500,6,5,B),
    ax+'<path d="M14 2h3v3h-3zM4 15h3v3H4z" fill="#333"/><path d="M4 8h3v3H4zM9 6h3v3H9zM15 12h3v3h-3z" fill="#83beec"/><path d="M8 12h3v3H8z" fill="#9bcbf0"/>',
    '<circle cx="10" cy="10" r="8.500" fill="#fff" stroke="#333"/><path d="M10 1.500a8.500 8.500 0 0 1 5 15.500L10 10z" fill="#83beec" stroke="#1a6fc4"/>',
    '<circle cx="10" cy="10" r="6.300" stroke="#1a6fc4" stroke-width="6"/><circle cx="10" cy="10" r="6.300" stroke="#83beec" stroke-width="4.200"/><path d="M2 8a8.500 8.500 0 0 1 7.500-6.500v5L6.500 9z" fill="#fff" stroke="#333"/>',
    r(1.5,1.500,17,17,H)+r(1.5,1.500,8,8,B)+r(1.500,9.500,8,9,B)+'<path d="M9.500 9.500h9M14 1.500v8M9.500 5.500h9M13.500 10v8.500" stroke="#333"/>',
    '<circle cx="11" cy="8.500" r="5.800" fill="#fff" stroke="#333"/><path d="M8 5l3-1 1 3-2 3zM13 8l3-2-1 4-2 2z" fill="#2a9d4a"/><path d="M5 3C2 8 5 15 11 15.500s7-2 8-4M11 16v2M6 18.500h10" stroke="#333" stroke-width="1.200"/>',
    '<path d="M1.500 3l5-1 3 1.500h4L18.500 3v7l-3 6-6 1.500-4-4-4-2z" fill="#c8c8c8" stroke="#333"/><path d="M1.500 3l5-1 2.500 3-1 4-4 1-2-1zM11 10l6.500-1-3 8-5 .5 2-4z" fill="#83beec" stroke="#1a6fc4"/>',
    '<path d="M12 0L2 17l8-4z" fill="#35b0e0"/><path d="M12 0l-2 13 8 6z" fill="#1b6fb0"/>',
    '<path d="M1.500 14.500a8.500 8.500 0 0 1 17 0h-4a4.500 4.500 0 0 0-9 0z" fill="#83beec" stroke="#1a6fc4"/><path d="M1.500 14.500a8.500 8.500 0 0 1 4-7l2.500 3a5 5 0 0 0-2.500 4z" fill="#fff" stroke="#333"/><path d="M9 14l4-6" stroke="#333" stroke-width="2"/>',
    r(1.5,3.500,17,13,H)+'<text x="3" y="14" font-size="10" textLength="14" lengthAdjust="spacingAndGlyphs" font-weight="500" fill="#1a86d0">123</text>',
    r(1.5,1.500,17,17,H)+'<path d="M5.500 4v12" stroke="#333"/><path d="M7 6h8M7 10h5M7 14h8" stroke="#1a6fc4" stroke-width="1.700"/>',
    r(1.500,3,17,14,H)+'<path d="M4 11l3-5 3 5z" fill="#2a9d4a"/><path d="M10.500 6h6L13.500 11z" fill="#d8334a"/><path d="M4 14h5M11 14h5" stroke="#777"/>',
    '<path d="M9 18.500H1.500V2.500h17V9" fill="none" stroke="#333"/><path d="M2 4h16" stroke="#aaa" stroke-width="2"/><path d="M4.500 8h3v3h-3zM4.500 13h3v3h-3z" stroke="#777"/><path d="M10 10.500h9l-3.500 4v5h-2.500v-5z" fill="#fff" stroke="#333"/>',
    r(1.500,2.500,17,16,H)+'<path d="M2 4h16" stroke="#bbb" stroke-width="2.500"/><path d="M1.500 6h17M1.500 10h17M1.500 14h17M7 6v12M13 6v12" stroke="#555"/>',
    r(1.500,2.500,17,16,H)+'<path d="M13 6h5.500v12.500H2V14h11z" fill="#83beec"/><path d="M2 4h16" stroke="#bbb" stroke-width="2.500"/><path d="M1.500 6h17M1.500 10h17M1.500 14h17M7 6v12M13 6v12" stroke="#333"/>',
    '<text x="5" y="15" font-size="14" textLength="9.500" lengthAdjust="spacingAndGlyphs" font-weight="700" fill="#2480c8">R</text>',
    '<text x="1" y="15" font-size="16" textLength="18" lengthAdjust="spacingAndGlyphs" font-weight="700" fill="#2480c8">Py</text>',
    ax+'<path d="M2 4.500h12M2 9.500h8M2 14h5" stroke="#555"/><circle cx="16" cy="4.500" r="2.300" fill="#83beec" stroke="#1a6fc4"/><path d="M10 8h3v3h-3zM7 12.500h3v3H7z" fill="#fff" stroke="#555"/>',
    '<path d="M7 10h6M10 3.500v13M10 3.500h3M10 16.500h3" stroke="#333"/>'+r(1.500,8,6,4,B)+r(13,1.500,6,4.500,B)+r(13,8,6,4.500,B)+r(13,14.500,6,4,B),
    '<path d="M1.500 2.500h17v11H9.500l-4.500 4v-4H1.500z" fill="#fff" stroke="#1a6fc4"/>',
    '<path d="M4.500 5V1.500h8l4 4v13h-12V12M12.500 1.500v4h4" fill="none" stroke="#333"/>'+r(2,6,3.500,3.500,B)+'<path d="M8 11h6M6 14.500h6" stroke="#1a6fc4"/>',
    '<path d="M5.500 3v5c0 7 9 7 9 0V3zM5 5H1.500c0 4 2 5 4.500 5.500M15 5h3.500c0 4-2 5-4.500 5.500M9 13.500l-1 3M11 13.500l1 3" fill="#fff" stroke="#333"/>'+r(5.500,1.500,9,3,B)+r(6.500,16,7,2.500,B),
    '<path d="M3.500 1.500h9l4 4v13h-13z" fill="#fff" stroke="#333" stroke-width="1.500"/><path d="M12.500 1.500v4h4" stroke="#333"/><path d="M6 12h2v5H6zM9 13.500h2V17H9zM12 9h2.200v8H12z" fill="#333"/>',
    '<path d="M9 4.500h10v13H1.500V12" fill="#fff" stroke="#333"/><text x="7" y="14.800" font-size="10" textLength="11.500" lengthAdjust="spacingAndGlyphs" font-weight="500" fill="#1a86d0">123</text>'+bolt,
    '<path d="M9 18.500H3.500V12M10 2.500h8.500V9" fill="none" stroke="#333"/><path d="M10 4h8" stroke="#aaa" stroke-width="2"/><path d="M5.500 14h3v3h-3z" stroke="#777"/><path d="M10 10.500h9l-3.500 4v5h-2.500v-5z" fill="#fff" stroke="#333"/>'+bolt,
    '<path d="M3 8h2v2H3zM9 8h2v2H9zM15 8h2v2h-2z" fill="#d9700a"/>'
  ];
  document.getElementById('viz').innerHTML=icons.map(i=>`<svg class="w-5 h-5 ml-[4px] mt-1" viewBox="0 0 20 20" fill="none">${i}</svg>`).join('');

  // ---- field list ----
  const tables=['a','booking','Cancle_booking','date','hotel','Occupency','Parameter','room','table'];
  const measures=['ADR','avg_Rev_per_r...','cancellation','cancellation %','capacity','check_out','checked_out %','current_Reven...','no_show','NO_show %','Occupancy %'];
  document.getElementById('fields').innerHTML=tables.map(t=>{
    const c=t==='Parameter'||t==='table';
    return `<div class="h-6 shrink-0 flex items-center pl-[13px] tracking-[-0.25px]"><svg class="w-3 h-3 -mt-[2px]" viewBox="0 0 12 12" fill="none" stroke="#605e5c"><path d="${t==='table'?'M.5 3L6 8.500 11.500 3':'M3.500 0l5.500 6-5.500 6'}"/></svg><svg class="${c?'w-4':'w-[14px] mr-[2px]'} h-[14px] ml-[3px] -mt-[3px]" viewBox="0 0 ${c?16:14} 14"><use href="#${c?'tblcalc':'tbl'}"/></svg><span class="ml-[3px]">${t}</span></div>`;
  }).join('')+measures.map(m=>`<div class="h-6 shrink-0 flex items-center pl-[44px] tracking-[-0.32px]"><i class="w-3 h-3 border border-[#7a7978] rounded-[2px] -mt-[3px]"></i><svg class="w-[14px] h-[14px] ml-[7px] -mt-[3px]" viewBox="0 0 14 14"><use href="#calc"/></svg><span class="ml-[5px]">${m}</span></div>`).join('');
</script>
</body>
</html>
